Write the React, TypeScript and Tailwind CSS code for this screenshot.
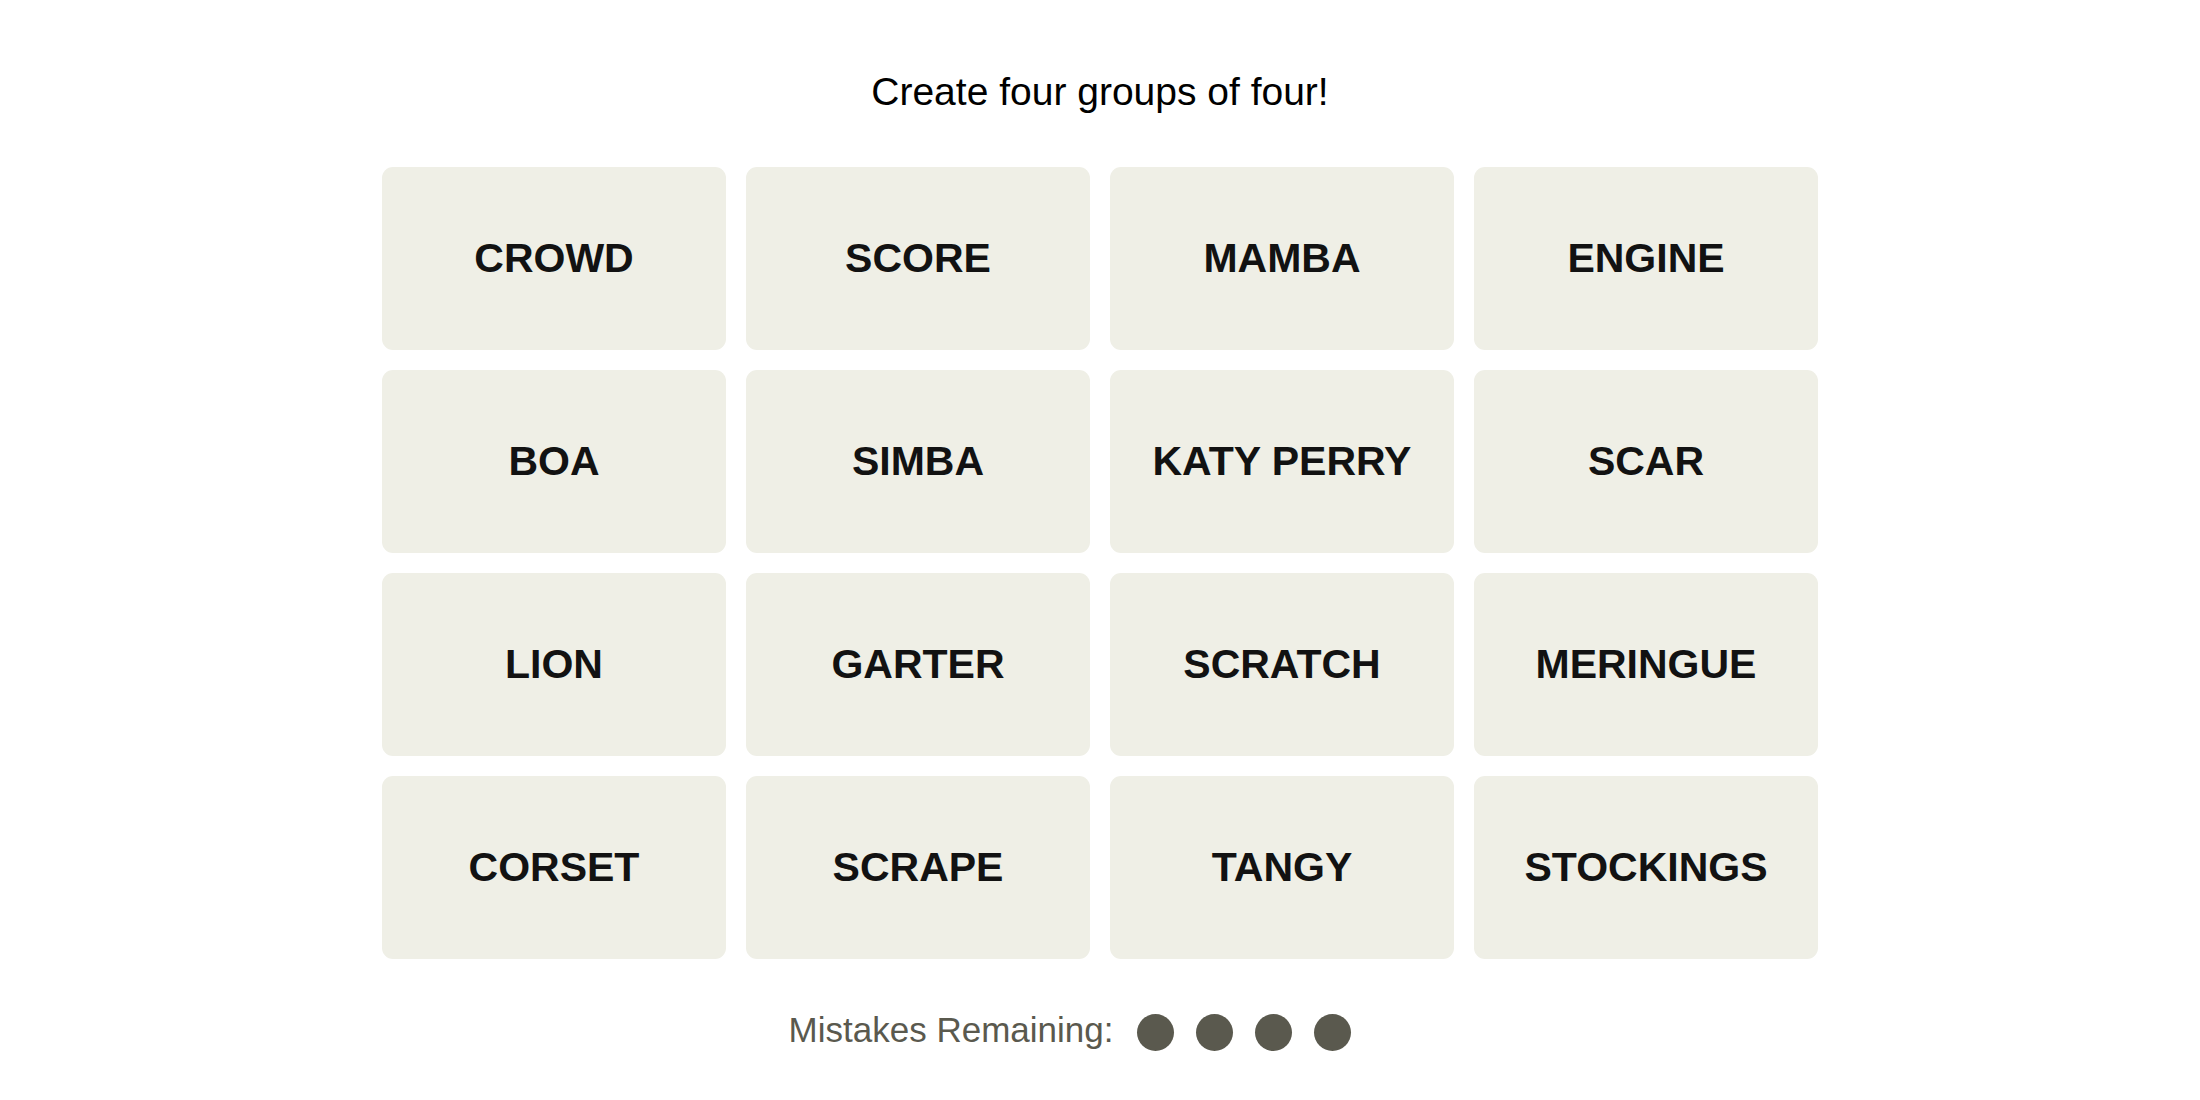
import React from "react";

const words = [
  "CROWD", "SCORE", "MAMBA", "ENGINE",
  "BOA", "SIMBA", "KATY PERRY", "SCAR",
  "LION", "GARTER", "SCRATCH", "MERINGUE",
  "CORSET", "SCRAPE", "TANGY", "STOCKINGS",
];

export default function App() {
  return (
    <div className="min-h-screen w-full bg-white flex flex-col items-center font-['Liberation_Sans',Arial,sans-serif]">
      <h1 className="mt-[68px] text-[39px] leading-[47px] font-normal text-black">
        Create four groups of four!
      </h1>
      <div className="mt-[52px] grid grid-cols-[repeat(4,344px)] auto-rows-[183px] gap-[20px]">
        {words.map((w) => (
          <button
            key={w}
            className="flex items-center justify-center rounded-[11px] bg-[#efefe6] text-[41px] font-bold text-[#121212] leading-none"
          >
            {w}
          </button>
        ))}
      </div>
      <div className="mt-[52px] flex items-center pr-[60px]">
        <span className="mb-[6px] text-[35px] leading-[37px] text-[#5a594e]">
          Mistakes Remaining:
        </span>
        <div className="ml-[24px] flex items-center gap-[22px]">
          <span className="block h-[37px] w-[37px] rounded-full bg-[#5a594e]" />
          <span className="block h-[37px] w-[37px] rounded-full bg-[#5a594e]" />
          <span className="block h-[37px] w-[37px] rounded-full bg-[#5a594e]" />
          <span className="block h-[37px] w-[37px] rounded-full bg-[#5a594e]" />
        </div>
      </div>
    </div>
  );
}
